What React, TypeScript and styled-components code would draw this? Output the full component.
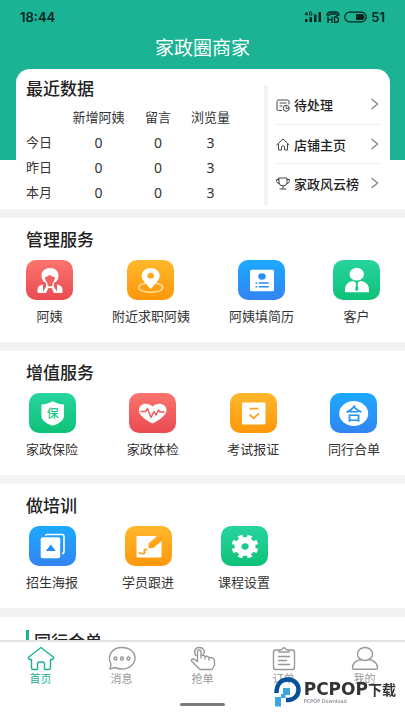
import React from 'react';
import styled, { createGlobalStyle } from 'styled-components';

const GlobalStyle = createGlobalStyle`
  * { box-sizing: border-box; }
  body {
    margin: 0;
    background: #fff;
    color: #222;
    font-family: "Noto Sans", "Noto Sans CJK SC", sans-serif;
  }
`;

const Screen = styled.div`
  height: 100vh;
  display: flex;
  flex-direction: column;
  overflow: hidden;
`;

const Content = styled.main`
  flex: 1;
  min-height: 0;
  overflow: hidden;
  background: linear-gradient(#1cb394 160px, #fff 160px);
`;

const StatusBar = styled.div`
  display: flex;
  align-items: center;
  justify-content: space-between;
  height: 34px;
  padding: 0 20px;
  color: #07261f;
  font: 600 13px/20px Inter, sans-serif;
`;

const StatusIcons = styled.div`
  display: flex;
  align-items: center;
  gap: 4px;
`;

const Title = styled.h1`
  margin: 0;
  height: 35px;
  color: #fff;
  font-size: 19px;
  font-weight: 400;
  line-height: 28px;
  text-align: center;
`;

const Card = styled.section`
  display: flex;
  margin: 0 15px 0 16px;
  padding: 8px 10px 4px;
  background: #fff;
  border-radius: 14px 14px 0 0;
`;

const Stats = styled.div`
  flex: 1;
`;

const Heading = styled.h2`
  margin: 0;
  font-size: 17px;
  font-weight: 500;
  line-height: 24px;
`;

const StatsTable = styled.table`
  width: 100%;
  margin-top: 4px;
  border-collapse: collapse;
  table-layout: fixed;
  font-size: 13px;
  line-height: 25px;
  color: #333;

  th, td { padding: 0; font-weight: 400; text-align: center; white-space: nowrap; }
  th:first-child { text-align: left; }
  td { font-size: 14px; }
`;

const Col = styled.col<{ $share: number }>`
  width: ${(p) => p.$share}%;
`;

const Shortcuts = styled.nav`
  flex: 0 0 116px;
  margin: 8px 0 0;
  padding-left: 8px;
  border-left: 4px solid #f3f3f3;
`;

const Shortcut = styled.a`
  display: flex;
  align-items: center;
  height: 39px;
  gap: 4px;
  color: #222;
  font-size: 13px;
  font-weight: 500;
  white-space: nowrap;
  text-decoration: none;

  & + & { border-top: 1px solid #eee; }
  span { flex: 1; }
  svg { flex: none; }
  svg:last-child { align-self: flex-start; margin-top: 13px; }
`;

const Section = styled.section`
  height: 133px;
  padding: 10px 25px 0 26px;
  border-top: 9px solid #f3f3f3;
  background: #fff;
`;

const Items = styled.div<{ $packed?: boolean }>`
  display: flex;
  justify-content: ${(p) => (p.$packed ? 'flex-start' : 'space-between')};
  gap: ${(p) => (p.$packed ? '44px' : '0')};
  margin-top: 8px;
`;

const Item = styled.button`
  display: flex;
  flex-direction: column;
  align-items: center;
  gap: 6px;
  padding: 0;
  border: 0;
  background: none;
  color: #333;
  font-family: inherit;
  font-size: 13px;
  line-height: 20px;
`;

const tones = {
  red: ['#fb746d', '#ea4a52'],
  orange: ['#ffb72c', '#ff970a'],
  blue: ['#1ba9ff', '#3384f2'],
  green: ['#27d49f', '#0fc177'],
};
type Tone = keyof typeof tones;

const Tile = styled.span<{ $tone: Tone }>`
  display: block;
  width: 47px;
  height: 40px;
  border-radius: 10px;
  background: linear-gradient(${(p) => tones[p.$tone].join(', ')});

  svg { display: block; }
`;

const Partial = styled.section`
  display: flex;
  gap: 5px;
  padding: 13px 26px;
  border-top: 9px solid #f3f3f3;
  background: #fff;

  &::before { content: ""; width: 3px; background: #1cb394; }
`;

const TabBar = styled.nav`
  display: flex;
  height: 63px;
  padding-top: 4px;
  border-top: 2px solid #e2e2e2;
  background: #fff;
`;

const Tab = styled.a<{ $active?: boolean }>`
  flex: 1;
  display: flex;
  flex-direction: column;
  align-items: center;
  color: ${(p) => (p.$active ? '#1cb394' : '#999')};
  font-size: 11px;
  line-height: 14px;
  text-decoration: none;
`;

const GestureArea = styled.div`
  height: 17px;

  &::before {
    content: "";
    display: block;
    width: 45px;
    height: 3px;
    margin: 0 auto;
    border-radius: 2px;
    background: #7c7c7c;
  }
`;

const Watermark = styled.div`
  position: fixed;
  right: 9px;
  bottom: 13px;
  display: flex;
  align-items: center;
  gap: 3px;
  color: #333;
`;

const Brand = styled.div`
  font: 700 17px/17px "DejaVu Sans", sans-serif;
  white-space: nowrap;

  span { font: 700 14px/16px "Noto Sans CJK SC", sans-serif; }
  small { display: block; color: #667; font: 400 5px/6px "DejaVu Sans", sans-serif; }
`;

const Glyph = ({ children }: { children: React.ReactNode }) => (
  <svg width="47" height="40" viewBox="0 0 47 40" fill="#fff" aria-hidden="true">{children}</svg>
);

const glyphs = {
  aunt: (
    <Glyph>
      <path d="M24 8c-5 0-8.500 3.200-8.500 7.500 0 3.500 1.500 6 4.500 7.500v4l-4 6h4l2.500-5h3l2.500 5h4l-4-6v-4c3-1.500 4.500-4 4.500-7.500C32.500 11.200 29 8 24 8z" />
      <path fill="#f3625f" d="M19 17c2 0 3.500-1 4.500-2.500 1 1.500 3 2.500 5.500 2.500-.3 3-1.200 5.200-2.500 6v2.500c-1.500 1.200-3.500 1.200-5 0V23c-1.500-1-2.400-3.200-2.500-6z" />
      <path d="M17 24.500v7.500q0 1-1 1h-3.500q-1 0-1-1v-2.500q0-4 5.500-5zM31 24.500v7.500q0 1 1 1h3.500q1 0 1-1v-2.500q0-4-5.500-5z" />
    </Glyph>
  ),
  pin: (
    <Glyph>
      <ellipse cx="23.700" cy="27.500" rx="12" ry="4.800" fill="none" stroke="#ffe1a4" strokeWidth="1.500" />
      <path fillRule="evenodd" d="M23.700 8c-5 0-9 3.300-9 7.700 0 4.300 4.500 8 9 13.300 4.500-5.300 9-9 9-13.300 0-4.400-4-7.700-9-7.700zm0 4.800a3.300 2.900 0 1 1 0 5.800 3.300 2.900 0 0 1 0-5.800z" />
    </Glyph>
  ),
  resume: (
    <Glyph>
      <rect x="12" y="9.700" width="24" height="21.500" rx="1.500" />
      <ellipse cx="24" cy="16.500" rx="3.700" ry="3.200" fill="#278ffa" />
      <path stroke="#278ffa" strokeWidth="1.400" d="M17.500 23h1.700M20.700 23h10M17.500 26.700h1.700M20.700 26.700h10" />
    </Glyph>
  ),
  client: (
    <Glyph>
      <ellipse cx="23.700" cy="14.200" rx="7.200" ry="6.400" />
      <path d="M12 32.300v-3c0-5 4-8 8-8.300l3.700 2 3.700-2c4.500.3 8.600 3.300 8.600 8.300v3z" />
      <path fill="#16c57f" d="M22.500 22.500h2.600l-.6 1.900.9 5-1.600 1.800-1.600-1.800.9-5z" />
    </Glyph>
  ),
  insurance: (
    <Glyph>
      <path d="M23.700 8.200c3.500 2 7 3 11.300 3.300v11.200c0 4.800-6 8.500-11.300 10-5.300-1.500-11.300-5.200-11.300-10V11.500c4.300-.3 7.800-1.300 11.300-3.300z" />
      <text x="23.700" y="24.500" fill="#17c984" fontSize="12" fontWeight="500" textAnchor="middle">保</text>
    </Glyph>
  ),
  health: (
    <Glyph>
      <path d="M23.500 30.500C17 27 9.800 22.500 9.800 17c0-6.500 9-8.500 13.700-3.500 5-5 14-3 14 3.500 0 5.500-7.500 10-14 13.500z" />
      <path fill="none" stroke="#f15b5b" strokeWidth="1.500" strokeLinejoin="round" strokeLinecap="round" d="M12 18.500h4.500l2-3 3.500 9 3-6 2 3.500 2.500-5 1.500 2H35" />
    </Glyph>
  ),
  exam: (
    <Glyph>
      <rect x="12" y="9.500" width="23.500" height="22" rx="1" />
      <path fill="none" stroke="#ffa31b" strokeWidth="1.800" d="M19.500 15.700h9M19.500 21.500l4 3.800 5.500-5" />
    </Glyph>
  ),
  combine: (
    <Glyph>
      <ellipse cx="23.700" cy="20.500" rx="14.500" ry="12.500" />
      <text x="23.700" y="26.500" fill="#2896fa" fontSize="17" fontWeight="500" textAnchor="middle">合</text>
    </Glyph>
  ),
  poster: (
    <Glyph>
      <path fill="none" stroke="#fff" strokeWidth="1.600" d="M16.500 9.500q.2-1 1.500-1h15q2 0 2 2v15q0 2-2 2.300" />
      <rect x="11.700" y="11.300" width="19.500" height="21" rx="2" />
      <path fill="#278ffa" d="M16.800 25l5-6.500 5 6.500z" />
    </Glyph>
  ),
  follow: (
    <Glyph>
      <path d="M12.500 10H32l-8.500 7.500v4.500h5L36.500 15v15.500q0 1-1 1h-23q-1 0-1-1V11q0-1 1-1z" />
      <path stroke="#ffa31b" strokeWidth="3.600" strokeLinecap="round" d="M26 20.500l10-8.700" />
      <path fill="none" stroke="#ffa31b" strokeWidth="1.800" strokeLinecap="round" d="M14.500 27c3 1.200 6 .8 5-1.200-.8-1.600 0-2.300 2-2.300" />
    </Glyph>
  ),
  gear: (
    <Glyph>
      <g transform="translate(24 20.500) scale(1.120 1) rotate(11.250)" fill="none" stroke="#fff">
        <circle r="6.300" strokeWidth="6.200" />
        <circle r="10" pathLength="64" strokeWidth="4" strokeDasharray="4 4" />
      </g>
    </Glyph>
  ),
};

type Service = { label: string; tone: Tone; glyph: keyof typeof glyphs };
const sections: { title: string; packed?: boolean; items: Service[] }[] = [
  {
    title: '管理服务',
    items: [
      { label: '阿姨', tone: 'red', glyph: 'aunt' },
      { label: '附近求职阿姨', tone: 'orange', glyph: 'pin' },
      { label: '阿姨填简历', tone: 'blue', glyph: 'resume' },
      { label: '客户', tone: 'green', glyph: 'client' },
    ],
  },
  {
    title: '增值服务',
    items: [
      { label: '家政保险', tone: 'green', glyph: 'insurance' },
      { label: '家政体检', tone: 'red', glyph: 'health' },
      { label: '考试报证', tone: 'orange', glyph: 'exam' },
      { label: '同行合单', tone: 'blue', glyph: 'combine' },
    ],
  },
  {
    title: '做培训',
    packed: true,
    items: [
      { label: '招生海报', tone: 'blue', glyph: 'poster' },
      { label: '学员跟进', tone: 'orange', glyph: 'follow' },
      { label: '课程设置', tone: 'green', glyph: 'gear' },
    ],
  },
];

const LineIcon = ({ children }: { children: React.ReactNode }) => (
  <svg width="14" height="14" viewBox="0 0 14 14" fill="none" stroke="#444" strokeLinejoin="round" strokeLinecap="round" aria-hidden="true">{children}</svg>
);

const shortcuts = [
  {
    label: '待处理',
    icon: <LineIcon><path d="M5.500 12.500H2.500q-1.500 0-1.500-1.500V3.500Q1 2 2.500 2h9Q13 2 13 3.500V6M4 5h6M4 8h2" /><circle cx="10.200" cy="10.300" r="3" /><path d="M10.200 8.800v1.700h1.200" /></LineIcon>,
  },
  {
    label: '店铺主页',
    icon: <LineIcon><path d="M.7 8 7 2l6.300 6M2.500 7v6H5.500V9.500q1.500-1.500 3 0V13h3V7" /></LineIcon>,
  },
  {
    label: '家政风云榜',
    icon: <LineIcon><path d="M3 2h8v4.500Q11 10 7 10T3 6.500zM3 3.500H.7v2Q1 7.500 3 7.500M11 3.500h2.300v2q-.3 2-2.300 2M7 10v2.500M4 13h6" /></LineIcon>,
  },
];

const TabIcon = ({ children }: { children: React.ReactNode }) => (
  <svg width="28" height="26" viewBox="0 0 28 26" fill="none" stroke="currentColor" strokeWidth="1.400" strokeLinejoin="round" strokeLinecap="round" aria-hidden="true">{children}</svg>
);

const tabs = [
  {
    label: '首页',
    icon: <TabIcon><path d="M1.200 11.500 14 1.500l12.800 10-1 2H23.500V22q0 1.500-1.500 1.500h-4.500V18q0-2-2-2h-3q-2 0-2 2v5.500H6Q4.500 23.500 4.500 22v-8.500H2.200z" /></TabIcon>,
  },
  {
    label: '消息',
    icon: <TabIcon><path d="M3 18C-1 11 3 1.500 14 1.500c7.500 0 13 4.500 13 10.500S21.500 23 14 23c-3 0-5-.5-7-1.500L2 23z" /><circle cx="7.500" cy="12.500" r="1.500" /><circle cx="14" cy="12.500" r="1.500" /><circle cx="20.500" cy="12.500" r="1.500" /></TabIcon>,
  },
  {
    label: '抢单',
    icon: <TabIcon><path d="M8.500 15.500V6q0-2 1.700-2T12 6v6M12 12V9.500q3-.8 4 1V13M16 10.500q3-.8 4 1V14M20 11.500q5.500-.3 5.500 3.500v4.500l-2.500 4H11l-8-8q-1.500-2 .5-2.700 2 0 5 2.700M7 9.500C4 6.500 6 1.500 10.200 1.500S16.500 5 14.500 8" /></TabIcon>,
  },
  {
    label: '订单',
    icon: <TabIcon><path d="M9 4H5.500Q3.500 4 3.500 6v15.500q0 2 2 2h17q2 0 2-2V6q0-2-2-2H19M9 6V4l3-.5q2-3.500 4 0l3 .5v2zM8.500 10.500h11M8.500 14.500h8M8.500 18.500h11" /></TabIcon>,
  },
  {
    label: '我的',
    icon: <TabIcon><ellipse cx="14" cy="8" rx="7.500" ry="6.500" /><path d="M10 13.500C5 14.500 1.500 17.500 1.500 22q0 1.200 1.500 1.200h22q1.500 0 1.500-1.200c0-4.500-3.500-7.500-8.500-8.500" /></TabIcon>,
  },
];

export default function App() {
  return (
    <Screen>
      <GlobalStyle />
      <Content>
        <StatusBar>
          <span>18:44</span>
          <StatusIcons>
            <svg width="18" height="14" viewBox="0 0 18 14" fill="currentColor" aria-hidden="true">
              <path d="M1 9h2.500v3H1zM5.500 7H8v5H5.500zM10 4.500h2.500V12H10zM14.500 2H17v10h-2.500z" />
              <path fill="none" stroke="currentColor" strokeWidth=".9" d="M3 5.500V2L1 4.500h3M8 2H5.500v3H8V3.700H6.800" />
            </svg>
            <svg width="14" height="14" viewBox="0 0 14 14" fill="none" stroke="currentColor" strokeWidth="1.300" aria-hidden="true">
              <path d="M1 5Q1.500 2 4.500 2h5Q12.500 2 13 5l-2 .3L10 4H4L3 5.300zM2 6.500V13M6 6.500V13M2 9.700h4M8.500 7v5.300h1.500q2.500 0 2.500-2.600T10 7z" />
            </svg>
            <svg width="23" height="12" viewBox="0 0 23 12" aria-hidden="true">
              <rect x=".7" y="1.200" width="21.600" height="9.600" rx="4.800" fill="none" stroke="currentColor" strokeWidth="1.200" />
              <path fill="currentColor" d="M12 3h6q2.500 0 2.500 3T18 9h-6z" />
            </svg>
            <span>51</span>
          </StatusIcons>
        </StatusBar>
        <Title>家政圈商家</Title>

        <Card>
          <Stats>
            <Heading>最近数据</Heading>
            <StatsTable>
              <colgroup><Col $share={18} /><Col $share={25} /><Col $share={25} /><Col $share={19} /><Col $share={13} /></colgroup>
              <thead>
                <tr><th aria-label="日期" /><th scope="col">新增阿姨</th><th scope="col">留言</th><th scope="col">浏览量</th><td /></tr>
              </thead>
              <tbody>
                {['今日', '昨日', '本月'].map((day) => (
                  <tr key={day}><th scope="row">{day}</th><td>0</td><td>0</td><td>3</td><td /></tr>
                ))}
              </tbody>
            </StatsTable>
          </Stats>
          <Shortcuts>
            {shortcuts.map((s) => (
              <Shortcut key={s.label} href="#">
                {s.icon}
                <span>{s.label}</span>
                <svg width="10" height="12" viewBox="0 0 10 12" fill="none" stroke="#888" strokeWidth="1.400" aria-hidden="true"><path d="M1.500 1 7.500 6l-6 5" /></svg>
              </Shortcut>
            ))}
          </Shortcuts>
        </Card>

        {sections.map((section) => (
          <Section key={section.title}>
            <Heading>{section.title}</Heading>
            <Items $packed={section.packed}>
              {section.items.map((item) => (
                <Item key={item.label} type="button">
                  <Tile $tone={item.tone}>{glyphs[item.glyph]}</Tile>
                  {item.label}
                </Item>
              ))}
            </Items>
          </Section>
        ))}
        <Partial>
          <Heading>同行合单</Heading>
        </Partial>
      </Content>

      <TabBar>
        {tabs.map((tab, i) => (
          <Tab key={tab.label} href="#" $active={i === 0}>
            {tab.icon}
            {tab.label}
          </Tab>
        ))}
      </TabBar>
      <GestureArea />

      <Watermark>
        <svg width="27" height="30" viewBox="0 0 27 30" aria-hidden="true">
          <path fill="none" stroke="#07509a" strokeWidth="4.500" d="M2.500 16C2.500 7 7 2.500 14 2.500c6 0 10.500 4.500 10.500 10.200S20 23 14 23h-2" />
          <path fill="#3ea5e2" d="M9 11h7v7h-4.500v3H7v8.500H1V20h6v-3h2z" />
        </svg>
        <Brand>
          PCPOP<span>下载</span>
          <small>PCPOP Download</small>
        </Brand>
      </Watermark>
    </Screen>
  );
}
